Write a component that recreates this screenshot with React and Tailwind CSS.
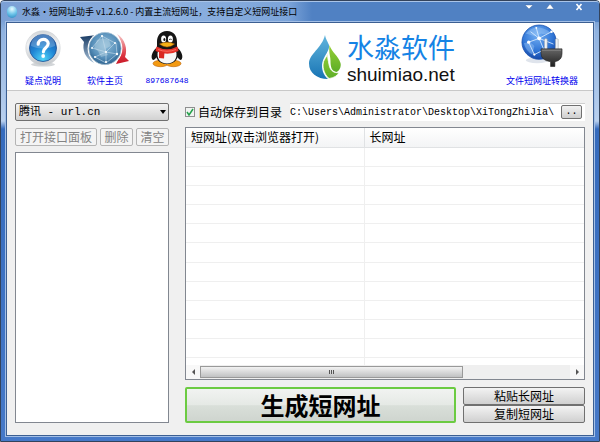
import React, { useState } from 'react';

const ROWS = Array.from({ length: 11 });

const HelpIcon = () => (
  <svg viewBox="0 0 36 38" className="h-[38px] w-9" aria-hidden="true">
    <defs>
      <linearGradient id="helpRim" x1="0" y1="0" x2="0" y2="1">
        <stop offset="0" stopColor="#d3d6d9" />
        <stop offset="0.4" stopColor="#f2f3f4" />
        <stop offset="1" stopColor="#c0c4c8" />
      </linearGradient>
      <radialGradient id="helpBlue" cx="0.5" cy="0.9" r="0.8">
        <stop offset="0" stopColor="#4fd4f7" />
        <stop offset="0.55" stopColor="#2087d6" />
        <stop offset="1" stopColor="#1b5faf" />
      </radialGradient>
    </defs>
    <ellipse cx="18" cy="34.5" rx="12" ry="2" fill="#d2d5d8" />
    <circle cx="18" cy="18" r="17.2" fill="url(#helpRim)" stroke="#cfd2d5" strokeWidth="0.6" />
    <circle cx="18" cy="18" r="13.5" fill="url(#helpBlue)" stroke="#24589b" strokeWidth="0.9" />
    <path d="M6 16a12 12 0 0 1 24 0q-12 5-24 0" fill="#fff" opacity="0.22" />
    <path d="M13.2 14.2c.2-6.4 10-6.2 10-.6 0 4.2-4.8 4-4.8 8.2" fill="none" stroke="#fff" strokeWidth="3.2" strokeLinecap="round" />
    <circle cx="18.2" cy="26" r="1.9" fill="#fff" />
  </svg>
);

const HomeIcon = () => (
  <svg viewBox="0 0 50 38" className="h-[38px] w-[50px]" aria-hidden="true">
    <defs>
      <radialGradient id="homeGlobe" cx="0.5" cy="0.4" r="0.6">
        <stop offset="0" stopColor="#8dbbd8" />
        <stop offset="0.65" stopColor="#5890ba" />
        <stop offset="1" stopColor="#2d628f" />
      </radialGradient>
      <linearGradient id="homeNavy" x1="0" y1="0" x2="0" y2="1">
        <stop offset="0" stopColor="#183a63" />
        <stop offset="1" stopColor="#a9c3da" />
      </linearGradient>
      <linearGradient id="homeRed" x1="0" y1="0" x2="0" y2="1">
        <stop offset="0" stopColor="#f7caca" />
        <stop offset="0.7" stopColor="#dc3440" />
        <stop offset="1" stopColor="#c81826" />
      </linearGradient>
    </defs>
    <path d="M0 7 17 5l-4 5C8 16 8 25 14 33 5 28 2 20 4 12Z" fill="url(#homeNavy)" />
    <path d="M37 4c8 5 11 15 8 23l4 4-13 3 2-4c5-8 5-18-1-26z" fill="url(#homeRed)" />
    <circle cx="25" cy="18.5" r="17.4" fill="#fff" />
    <circle cx="25" cy="18.5" r="16.2" fill="url(#homeGlobe)" stroke="#c3d3de" strokeWidth="0.6" />
    <path d="M17 10q7-3 12 0l2 6-6 3 3 6-7 2-3-6-4-3z" fill="#b4d2e1" opacity="0.5" />
    <path d="m12 18 10-12 13 7-9 9-11 5 11 6 11-9-1-11M22 6l4 16 11 2M12 18l14 4v11" fill="none" stroke="#c8deec" strokeWidth="0.6" />
    <g fill="#fff">
      <circle cx="22" cy="6" r="1.1" />
      <circle cx="35" cy="13" r="1" />
      <circle cx="26" cy="22" r="1" />
      <circle cx="15" cy="27" r="1.1" />
      <circle cx="26" cy="32" r="1.1" />
      <circle cx="37" cy="24" r="1.2" />
      <circle cx="12" cy="18" r="0.9" />
    </g>
  </svg>
);

const PenguinIcon = () => (
  <svg viewBox="0 0 34 38" className="h-[38px] w-[34px]" aria-hidden="true">
    <path d="M8 17C2 20 0 28 3 30q2 0 5-5zM26 17c6 3 8 11 5 13q-2 0-5-5z" fill="#151515" />
    <ellipse cx="10.5" cy="33.5" rx="7.5" ry="3.2" fill="#f39a12" stroke="#b8620a" strokeWidth="0.6" />
    <ellipse cx="23.5" cy="33.5" rx="7.5" ry="3.2" fill="#f39a12" stroke="#b8620a" strokeWidth="0.6" />
    <path d="M17 1c-7 0-10 5-10 11v5c-3 7-1 17 10 17s13-10 10-17v-5C27 6 24 1 17 1z" fill="#161616" />
    <path d="M8 21c-2 7 2 12.5 9 12.5s11-5.5 9-12.5z" fill="#f7f7f7" />
    <ellipse cx="13.6" cy="9" rx="2.5" ry="3.6" fill="#fff" />
    <ellipse cx="20.4" cy="9" rx="2.5" ry="3.6" fill="#fff" />
    <ellipse cx="14.4" cy="9.5" rx="1" ry="1.6" fill="#111" />
    <path d="M19.2 10q1.2-2.4 2.4 0" fill="none" stroke="#111" strokeWidth="0.9" />
    <path d="M9.5 14q7.5-3.5 15 0-7.5 6-15 0z" fill="#f6b016" stroke="#b9670b" strokeWidth="0.5" />
    <path d="M6.5 16.5q10.5 5.500 21 0l1 4.500q-11 5.500-23 0z" fill="#e5322a" />
    <path d="m9 21 5.500 1-.5 6.500-5-.5z" fill="#d92720" />
    <path d="M8 19.500q9 3.500 18 0" fill="none" stroke="#ff796b" strokeWidth="0.8" />
  </svg>
);

const PlugIcon = () => (
  <svg viewBox="0 0 44 46" className="h-[44px] w-[42px]" aria-hidden="true">
    <defs>
      <radialGradient id="plugGlobe" cx="0.45" cy="0.3" r="0.75">
        <stop offset="0" stopColor="#74aff2" />
        <stop offset="0.6" stopColor="#2f75d6" />
        <stop offset="1" stopColor="#123f9d" />
      </radialGradient>
      <linearGradient id="plugBody" x1="0" y1="0" x2="0" y2="1">
        <stop offset="0" stopColor="#666" />
        <stop offset="1" stopColor="#202020" />
      </linearGradient>
    </defs>
    <ellipse cx="17" cy="38" rx="12" ry="3" fill="#dfe4ec" />
    <circle cx="19" cy="19" r="18" fill="url(#plugGlobe)" stroke="#174fae" strokeWidth="0.8" />
    <path d="M5 10q11-12 26-1-6 3-10 1-4 3-9 2zM3 20q7-2 11 3l-2 9Q5 28 3 20z" fill="#a8d0fb" opacity="0.4" />
    <path d="m8 19 11-4 13-7M19 15l-3-11M19 15l5 12-10 5-6-13M19 15l-9-7M19 15l15 6" fill="none" stroke="#d8ebff" strokeWidth="0.9" />
    <g fill="#fff">
      <circle cx="19" cy="15" r="2" />
      <circle cx="8" cy="19" r="1.7" />
      <circle cx="32" cy="8" r="1.3" />
      <circle cx="16" cy="4" r="1" />
      <circle cx="14" cy="32" r="1.2" />
    </g>
    <path d="M24.5 16q1.500-1.500 3 0v12h-3zM36 16q1.500-1.500 3 0v12h-3z" fill="#f1f3f5" stroke="#8b939b" strokeWidth="0.5" />
    <path d="M21 26h22v5q0 7-7.500 8.500v5h-4.500v-5Q21 38 21 31z" fill="url(#plugBody)" stroke="#222" strokeWidth="0.6" />
    <path d="M22 27.500h20" stroke="#8a8a8a" strokeWidth="0.8" />
  </svg>
);

const DropLogo = () => (
  <svg viewBox="0 0 32 46" className="mb-[6px] h-[46px] w-8 shrink-0" aria-hidden="true">
    <defs>
      <linearGradient id="dropBlue" x1="0" y1="0" x2="0" y2="1">
        <stop offset="0" stopColor="#62b6dd" />
        <stop offset="1" stopColor="#1874b4" />
      </linearGradient>
      <linearGradient id="dropGreen" x1="0" y1="0" x2="0" y2="1">
        <stop offset="0" stopColor="#96cf35" />
        <stop offset="1" stopColor="#5dae27" />
      </linearGradient>
    </defs>
    <path d="M16 1c1 5 3 7 4 10 1 5-5 11-6.500 17-1.500 7 1 13 5.500 17C8 45 0 39 0 29.500 0 20 13 14 16 1z" fill="url(#dropBlue)" />
    <path d="M20.500 11c2 7 9 11 11 18 1 4-1 8-4 9-5-1-6-5-6-11 0-5-2-8-1-16z" fill="url(#dropGreen)" />
    <path d="M19 18c-1 6-5 7-5 13 0 6 3 11 6 13.500 5-.5 8.500-3 10-6-5 1-9-2-10-8-.5-4-2-7-1-12.500z" fill="url(#dropGreen)" stroke="#fff" strokeWidth="0.8" />
  </svg>
);

const ToolLink = ({ icon, label, mono }) => (
  <a href="#" className="flex min-w-[62px] flex-col items-center justify-end text-[#0000ee]">
    {icon}
    <span
      className={
        mono
          ? 'mt-[6px] font-["Liberation_Mono",monospace] text-[8px] leading-[14px]'
          : 'mt-[6px] text-[9px] leading-[14px] whitespace-nowrap'
      }
    >
      {label}
    </span>
  </a>
);

const SmallButton = ({ children, className = '', ...rest }) => (
  <button
    type="button"
    className={`h-[18px] rounded-[2px] border text-xs leading-4 whitespace-nowrap ${className}`}
    {...rest}
  >
    {children}
  </button>
);

const App = () => {
  const [site, setSite] = useState('url.cn');
  const [autoSave, setAutoSave] = useState(true);
  const [path, setPath] = useState('C:\\Users\\Administrator\\Desktop\\XiTongZhiJia\\');

  return (
    <div className='flex min-h-screen w-full flex-col rounded-t-[4px] border border-[#33435c] bg-[linear-gradient(#4f80c2_0,#8fb2e0_30px,#b9d0ee_120px,#356bbd_128px,#4679c8)] font-["Noto_Sans_CJK_SC",sans-serif] text-black'>
      {/* Title bar */}
      <header className="flex h-[21px] items-center rounded-t-[3px] border-t border-[#a9c4e8] bg-[linear-gradient(90deg,#7ba0d5,#8cb0df_30%,#7ca4d9_48%,#5081c3_52%)] pr-4 pl-[6px]">
        <span className="h-3 w-[10px] rounded-full bg-[radial-gradient(circle_at_50%_25%,#e9fbff,#6fc5ea_50%,#2483bd)]" />
        <h1 className="ml-[5px] text-[9px] leading-4 whitespace-nowrap">
          水淼·短网址助手 v1.2.6.0 - 内置主流短网址，支持自定义短网址接口
        </h1>
        <div className="ml-auto flex h-3 items-start gap-[13px] self-start">
          <button type="button" aria-label="最小化" className="h-3 w-2">
            <svg viewBox="0 0 8 12" className="h-3 w-2"><path d="M0 3h8L4 7z" fill="#fff" stroke="#3b639c" strokeWidth="0.4" /></svg>
          </button>
          <button type="button" aria-label="最大化" className="h-3 w-2">
            <svg viewBox="0 0 8 12" className="h-3 w-2"><path d="M0 7h8L4 2z" fill="#fff" stroke="#3b639c" strokeWidth="0.4" /></svg>
          </button>
          <button type="button" aria-label="关闭" className="ml-2 h-3 w-2">
            <svg viewBox="0 0 8 12" className="h-3 w-2"><path d="m1.500 2 5 6m0-6-5 6" stroke="#fff" strokeWidth="1.6" /></svg>
          </button>
        </div>
      </header>

      <main className="mx-[5px] mb-[5px] flex flex-1 flex-col border border-[#3c5f92] bg-[#f0f0f0] ring-1 ring-[#a3bfe6]">
        {/* Toolbar */}
        <nav className="flex h-[68px] items-end border-b border-[#c8c8c8] bg-white pr-[15px] pb-[2px] pl-[5px]">
          <ToolLink icon={<HelpIcon />} label="疑点说明" />
          <ToolLink icon={<HomeIcon />} label="软件主页" />
          <ToolLink icon={<PenguinIcon />} label="897687648" mono />
          <div className="mr-12 mb-[2px] ml-auto flex items-end gap-[6px]">
            <DropLogo />
            <div className='w-[111px] font-["Liberation_Sans","Noto_Sans_CJK_SC",sans-serif]'>
              <p className="text-[27px] leading-[30px] whitespace-nowrap text-[#1583e5]">水淼软件</p>
              <p className="text-[19px] leading-[22px] text-[#111]">shuimiao.net</p>
            </div>
          </div>
          <ToolLink icon={<PlugIcon />} label="文件短网址转换器" />
        </nav>

        <div className="flex flex-1 gap-4 px-2 pt-3 pb-3">
          {/* Interface list */}
          <section className="flex w-[154px] shrink-0 flex-col">
            <div className="relative">
              <select
                aria-label="短网址接口"
                value={site}
                onChange={(e) => setSite(e.target.value)}
                className='block h-[18px] w-full appearance-none rounded-[2px] border border-[#707070] bg-linear-to-b from-[#f3f3f3] to-[#d2d2d2] pl-[3px] font-["Liberation_Mono","Noto_Sans_CJK_SC",monospace] text-[11px] leading-4'
              >
                <option value="url.cn">腾讯 - url.cn</option>
              </select>
              <svg viewBox="0 0 6 4" className="pointer-events-none absolute top-[7px] right-[3px] h-1 w-[6px]">
                <path d="M0 0h6L3 4z" />
              </svg>
            </div>
            <div className="mt-[7px] flex gap-[3px]">
              <SmallButton disabled className="flex-1 border-[#b4b4b4] bg-[#f4f4f4] text-[#838383]">打开接口面板</SmallButton>
              <SmallButton disabled className="w-[33px] border-[#b4b4b4] bg-[#f4f4f4] text-[#838383]">删除</SmallButton>
              <SmallButton disabled className="w-[33px] border-[#b4b4b4] bg-[#f4f4f4] text-[#838383]">清空</SmallButton>
            </div>
            <div className="mt-[6px] flex-1 border border-[#828790] bg-white" />
          </section>

          {/* Results */}
          <section className="flex min-w-0 flex-1 flex-col">
            <div className="flex h-[18px] items-center">
              <input
                id="autosave"
                type="checkbox"
                checked={autoSave}
                onChange={(e) => setAutoSave(e.target.checked)}
                className="h-[10px] w-[10px] shrink-0 appearance-none border border-[#8e8f8f] bg-[#f1f4f2] checked:bg-[url('data:image/svg+xml,%3Csvg%20xmlns=%22http://www.w3.org/2000/svg%22%20viewBox=%220%200%208%208%22%3E%3Cpath%20d=%22M1%204l2%203%204-6%22%20fill=%22none%22%20stroke=%22%2323a04a%22%20stroke-width=%221.5%22/%3E%3C/svg%3E')]"
              />
              <label htmlFor="autosave" className="ml-[3px] text-xs leading-4 whitespace-nowrap">自动保存到目录</label>
              <div className="relative ml-2 min-w-0 flex-1">
                <input
                  type="text"
                  aria-label="保存目录"
                  value={path}
                  onChange={(e) => setPath(e.target.value)}
                  className='block h-[18px] w-full border-t border-[#d0d0d0] bg-white font-["Liberation_Mono",monospace] text-[10px]'
                />
                <button
                  type="button"
                  aria-label="浏览"
                  className='absolute top-[2px] right-[3px] h-[14px] w-[21px] rounded-[2px] border border-[#707070] bg-linear-to-b from-[#f2f2f2] to-[#cfcfcf] font-["Liberation_Mono",monospace] text-[10px] leading-3'
                >
                  ..
                </button>
              </div>
            </div>

            <div className="mt-[6px] flex flex-1 flex-col border border-[#828790] bg-white">
              <table className="w-full flex-1 table-fixed border-collapse text-xs">
                <thead>
                  <tr className="h-[19px] bg-linear-to-b from-white to-[#f3f4f5]">
                    <th className="w-[178px] border-r border-b border-[#e0e2e4] pl-[5px] text-left leading-4 font-normal">短网址(双击浏览器打开)</th>
                    <th className="border-b border-[#e0e2e4] pl-[5px] text-left leading-4 font-normal">长网址</th>
                  </tr>
                </thead>
                <tbody>
                  {ROWS.map((_, i) => (
                    <tr key={i} className="h-[19px]">
                      <td className="border-r border-b border-[#efefef]" />
                      <td className="border-b border-[#efefef]" />
                    </tr>
                  ))}
                  {/* last row is cut off by the scrollbar */}
                  <tr className="h-[7px]">
                    <td className="border-r border-[#efefef]" />
                    <td />
                  </tr>
                </tbody>
              </table>
              <div className="mt-auto flex h-[14px] items-stretch bg-[#efefef]">
                <span className="flex w-[14px] items-center justify-center bg-[#f8f8f8]">
                  <svg viewBox="0 0 3 6" className="h-[6px] w-[3px]"><path d="M3 0v6L0 3z" fill="#555" /></svg>
                </span>
                <span className="my-[1px] flex w-[66%] items-center justify-center gap-[1px] border border-[#999] bg-linear-to-b from-[#f2f2f2] to-[#c0c1c2]">
                  <i className="h-1 w-px bg-[#555]" />
                  <i className="h-1 w-px bg-[#555]" />
                  <i className="h-1 w-px bg-[#555]" />
                </span>
                <span className="ml-auto flex w-[14px] items-center justify-center bg-[#f8f8f8]">
                  <svg viewBox="0 0 3 6" className="h-[6px] w-[3px]"><path d="M0 0v6l3-3z" fill="#555" /></svg>
                </span>
              </div>
            </div>

            <div className="mt-[7px] flex gap-[7px]">
              <button
                type="button"
                className="flex-1 rounded-[2px] border-2 border-[#6ccb42] bg-[linear-gradient(#f1f3f1,#e5e9e5_50%,#d9dfd9_52%,#cfd5cf)] text-2xl leading-8 font-bold"
              >
                生成短网址
              </button>
              <div className="flex w-[122px] flex-col">
                <SmallButton className="border-[#707070] bg-linear-to-b from-[#f3f3f3] to-[#d0d0d0]">粘贴长网址</SmallButton>
                <SmallButton className="border-[#707070] bg-linear-to-b from-[#f3f3f3] to-[#d0d0d0]">复制短网址</SmallButton>
              </div>
            </div>
          </section>
        </div>
      </main>
    </div>
  );
};

export default App;
